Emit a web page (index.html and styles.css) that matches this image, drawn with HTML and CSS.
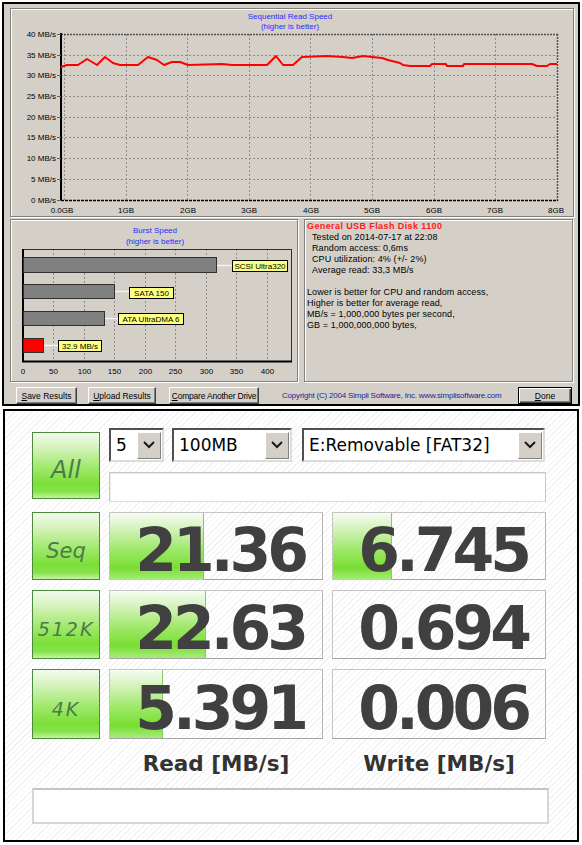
FILE: index.html
```html
<!DOCTYPE html>
<html lang="en">
<head>
    <meta charset="UTF-8">
    <title>HD Speed / CrystalDiskMark</title>
    <link rel="stylesheet" href="styles.css">
</head>
<body>
    <div class="hds">
        <div class="panel graph">
            <svg class="chart" width="562" height="207" viewBox="11 9 562 207">
                <text class="ttl" x="290" y="19" text-anchor="middle">Sequential Read Speed</text>
                <text class="ttl" x="290" y="29" text-anchor="middle">(higher is better)</text>
                <g class="grid-line">
                    <line x1="61" y1="55.5" x2="557" y2="55.5"/>
                    <line x1="61" y1="75.5" x2="557" y2="75.5"/>
                    <line x1="61" y1="96.5" x2="557" y2="96.5"/>
                    <line x1="61" y1="117.5" x2="557" y2="117.5"/>
                    <line x1="61" y1="137.5" x2="557" y2="137.5"/>
                    <line x1="61" y1="158.5" x2="557" y2="158.5"/>
                    <line x1="61" y1="179.5" x2="557" y2="179.5"/>
                    <line x1="64.5" y1="34" x2="64.5" y2="200"/>
                    <line x1="126.5" y1="34" x2="126.5" y2="200"/>
                    <line x1="187.5" y1="34" x2="187.5" y2="200"/>
                    <line x1="249.5" y1="34" x2="249.5" y2="200"/>
                    <line x1="310.5" y1="34" x2="310.5" y2="200"/>
                    <line x1="372.5" y1="34" x2="372.5" y2="200"/>
                    <line x1="434.5" y1="34" x2="434.5" y2="200"/>
                    <line x1="495.5" y1="34" x2="495.5" y2="200"/>
                </g>
                <g class="frame-line">
                    <line x1="61" y1="34.5" x2="558" y2="34.5"/>
                    <line x1="557.5" y1="34" x2="557.5" y2="201"/>
                </g>
                <line class="axis" x1="61" y1="33" x2="61" y2="201"/>
                <line class="axis-x" x1="61" y1="200.5" x2="558" y2="200.5"/>
                <g class="tick">
                    <line x1="57" y1="34.5" x2="61" y2="34.5"/>
                    <line x1="57" y1="55.5" x2="61" y2="55.5"/>
                    <line x1="57" y1="75.5" x2="61" y2="75.5"/>
                    <line x1="57" y1="96.5" x2="61" y2="96.5"/>
                    <line x1="57" y1="117.5" x2="61" y2="117.5"/>
                    <line x1="57" y1="137.5" x2="61" y2="137.5"/>
                    <line x1="57" y1="158.5" x2="61" y2="158.5"/>
                    <line x1="57" y1="179.5" x2="61" y2="179.5"/>
                    <line x1="57" y1="200.5" x2="61" y2="200.5"/>
                </g>
                <g text-anchor="end">
                    <text x="56" y="37">40 MB/s</text>
                    <text x="56" y="58">35 MB/s</text>
                    <text x="56" y="78">30 MB/s</text>
                    <text x="56" y="99">25 MB/s</text>
                    <text x="56" y="120">20 MB/s</text>
                    <text x="56" y="140">15 MB/s</text>
                    <text x="56" y="161">10 MB/s</text>
                    <text x="56" y="182">5 MB/s</text>
                    <text x="56" y="203">0 MB/s</text>
                </g>
                <g text-anchor="middle">
                    <text x="62" y="213">0.0GB</text>
                    <text x="126" y="213">1GB</text>
                    <text x="188" y="213">2GB</text>
                    <text x="249" y="213">3GB</text>
                    <text x="311" y="213">4GB</text>
                    <text x="372" y="213">5GB</text>
                    <text x="434" y="213">6GB</text>
                    <text x="495" y="213">7GB</text>
                    <text x="556" y="213">8GB</text>
                </g>
                <polyline class="speed" points="61,67 67,65 78,65 87,59 97,65 105,57 113,63 120,65 138,65 148,57 157,60 164,65 172,62 180,62 188,65 222,64 232,65 267,65 276,56 283,65 293,65 302,57 327,56 343,57 352,58 363,56 372,57 382,58 388,60 400,63 403,65 410,66 430,66 432,64 446,64 447,66 463,66 464,64 532,64 537,66 547,66 550,64 557,64"/>
            </svg>
        </div>
        <div class="lower">
            <div class="panel burst">
                <svg class="chart" width="286" height="161" viewBox="11 220 286 161">
                    <text class="ttl" x="155" y="233" text-anchor="middle">Burst Speed</text>
                    <text class="ttl" x="155" y="244" text-anchor="middle">(higher is better)</text>
                    <g class="grid-line">
                        <line x1="53.5" y1="249" x2="53.5" y2="362"/>
                        <line x1="84.5" y1="249" x2="84.5" y2="362"/>
                        <line x1="114.5" y1="249" x2="114.5" y2="362"/>
                        <line x1="145.5" y1="249" x2="145.5" y2="362"/>
                        <line x1="175.5" y1="249" x2="175.5" y2="362"/>
                        <line x1="206.5" y1="249" x2="206.5" y2="362"/>
                        <line x1="236.5" y1="249" x2="236.5" y2="362"/>
                        <line x1="267.5" y1="249" x2="267.5" y2="362"/>
                    </g>
                    <rect class="plot" x="23" y="249.5" width="268.5" height="112"/>
                    <line class="axis" x1="23" y1="249" x2="23" y2="362"/>
                    <line class="axis" x1="22" y1="361.5" x2="292" y2="361.5"/>
                    <g class="link">
                        <line x1="217" y1="265.5" x2="232" y2="265.5"/>
                        <line x1="114" y1="291.5" x2="129" y2="291.5"/>
                        <line x1="104" y1="318.5" x2="118" y2="318.5"/>
                        <line x1="43" y1="345.5" x2="58" y2="345.5"/>
                    </g>
                    <rect class="bar" x="23.5" y="257.5" width="193" height="15"/>
                    <rect class="bar" x="23.5" y="284.5" width="91" height="14"/>
                    <rect class="bar" x="23.5" y="311.5" width="81" height="14"/>
                    <rect class="bar bar-own" x="23.5" y="338.5" width="20" height="14"/>
                    <rect class="tag" x="232.5" y="260.5" width="55" height="11"/>
                    <rect class="tag" x="129.5" y="287.5" width="44" height="11"/>
                    <rect class="tag" x="118.5" y="313.5" width="65" height="11"/>
                    <rect class="tag" x="58.5" y="340.5" width="43" height="11"/>
                    <g text-anchor="middle">
                        <text x="260" y="269">SCSI Ultra320</text>
                        <text x="151.5" y="296">SATA 150</text>
                        <text x="151" y="322">ATA UltraDMA 6</text>
                        <text x="80" y="349">32.9 MB/s</text>
                        <text x="23" y="374">0</text>
                        <text x="53.5" y="374">50</text>
                        <text x="84.5" y="374">100</text>
                        <text x="114.5" y="374">150</text>
                        <text x="145.5" y="374">200</text>
                        <text x="175.5" y="374">250</text>
                        <text x="206.5" y="374">300</text>
                        <text x="236.5" y="374">350</text>
                        <text x="267.5" y="374">400</text>
                    </g>
                </svg>
            </div>
            <div class="panel info">
                <div class="drive">General USB Flash Disk 1100</div>
                <div class="stat">Tested on 2014-07-17 at 22:08</div>
                <div class="stat">Random access: 0,6ms</div>
                <div class="stat">CPU utilization: 4% (+/- 2%)</div>
                <div class="stat">Average read: 33,3 MB/s</div>
                <div class="notes">
                    <div>Lower is better for CPU and random access,</div>
                    <div>Higher is better for average read,</div>
                    <div>MB/s = 1,000,000 bytes per second,</div>
                    <div>GB = 1,000,000,000 bytes,</div>
                </div>
            </div>
        </div>
        <div class="actions">
            <button class="btn btn-save"><u>S</u>ave Results</button>
            <button class="btn btn-upload"><u>U</u>pload Results</button>
            <button class="btn btn-compare"><u>C</u>ompare Another Drive</button>
            <span class="copyright">Copyright (C) 2004 Simpli Software, Inc. www.simplisoftware.com</span>
            <button class="btn btn-done"><u>D</u>one</button>
        </div>
    </div>

    <div class="cdm">
        <div class="board">
            <div class="mode mode-all">All</div>
            <div class="setup">
                <div class="selects">
                    <div class="select sel-count">
                        <span class="value">5</span>
                        <span class="arrow"><svg width="12" height="8" viewBox="0 0 12 8"><polyline points="1,1 6,6 11,1"/></svg></span>
                    </div>
                    <div class="select sel-size">
                        <span class="value">100MB</span>
                        <span class="arrow"><svg width="12" height="8" viewBox="0 0 12 8"><polyline points="1,1 6,6 11,1"/></svg></span>
                    </div>
                    <div class="select sel-drive">
                        <span class="value">E:Removable [FAT32]</span>
                        <span class="arrow"><svg width="12" height="8" viewBox="0 0 12 8"><polyline points="1,1 6,6 11,1"/></svg></span>
                    </div>
                </div>
                <div class="status"></div>
            </div>

            <div class="mode">Seq</div>
            <div class="cell"><div class="fill" style="width: 44.4%"></div><div class="num">21.36</div></div>
            <div class="cell"><div class="fill" style="width: 27.6%"></div><div class="num">6.745</div></div>

            <div class="mode mode-small">512K</div>
            <div class="cell"><div class="fill" style="width: 45.3%"></div><div class="num">22.63</div></div>
            <div class="cell"><div class="num">0.694</div></div>

            <div class="mode mode-small">4K</div>
            <div class="cell"><div class="fill" style="width: 24.8%"></div><div class="num">5.391</div></div>
            <div class="cell"><div class="num">0.006</div></div>

            <div></div>
            <div class="unit">Read [MB/s]</div>
            <div class="unit">Write [MB/s]</div>

            <div class="comment"></div>
        </div>
    </div>
</body>
</html>
```

FILE: styles.css
```css
* {
    box-sizing: border-box;
}
body {
    margin: 0;
    width: 582px;
    height: 845px;
    overflow: hidden;
    background: #fff;
    font-family: "Liberation Sans", Arial, sans-serif;
}

/* HD Speed window */
.hds {
    width: 578px;
    height: 404px;
    margin: 2px 0 0 2px;
    padding: 4px 0 0 6px;
    border: 2px solid #000;
    background: #d4d0c8;
}
.panel {
    border: 1px solid #808080;
    box-shadow: inset 1px 1px 0 #fff, 1px 1px 0 #fff;
}
.graph {
    width: 564px;
    height: 209px;
}
.chart {
    display: block;
}
.chart text {
    font-family: "Liberation Sans", Arial, sans-serif;
    font-size: 8px;
    fill: #000;
}
.chart .ttl {
    fill: #2b2bff;
}
.grid-line line {
    stroke: #8c8c8c;
    stroke-width: 1;
    stroke-dasharray: 2 2;
}
.frame-line line {
    stroke: #505050;
    stroke-width: 1.5;
    stroke-dasharray: 2 1;
}
.axis {
    stroke: #000;
    stroke-width: 2;
}
.axis-x {
    stroke: #000;
    stroke-width: 1.5;
    stroke-dasharray: 3 1;
}
.tick line {
    stroke: #606060;
    stroke-width: 1;
}
.speed {
    fill: none;
    stroke: #ff0000;
    stroke-width: 2;
    stroke-linejoin: round;
}
.plot {
    fill: none;
    stroke: #303030;
    stroke-width: 1;
}
.bar {
    fill: #808080;
    stroke: #303030;
    stroke-width: 1;
}
.bar-own {
    fill: #ff0000;
}
.link line {
    stroke: #f4f4f4;
    stroke-width: 1.5;
}
.tag {
    fill: #ffff80;
    stroke: #000;
    stroke-width: 1;
}

.lower {
    display: flex;
    margin-top: 2px;
}
.burst {
    width: 288px;
    height: 163px;
}
.info {
    width: 269px;
    height: 163px;
    margin-left: 6px;
    padding: 1px 0 0 2px;
    font-size: 9px;
    line-height: 11px;
    letter-spacing: 0.1px;
    color: #000;
}
.drive {
    color: #ff1a1a;
    font-weight: bold;
    letter-spacing: 0.4px;
}
.stat {
    padding-left: 5px;
}
.notes {
    margin-top: 11px;
}

.actions {
    display: flex;
    align-items: center;
    height: 17px;
    margin-top: 5px;
}
.btn {
    height: 17px;
    padding: 0;
    border: 1px solid;
    border-color: #fff #404040 #404040 #fff;
    box-shadow: inset -1px -1px 0 #808080;
    background: #d4d0c8;
    color: #000;
    font-family: "Liberation Sans", Arial, sans-serif;
    font-size: 8.5px;
}
.btn-save {
    width: 61px;
    margin-left: 6px;
}
.btn-upload {
    width: 68px;
    margin-left: 11px;
}
.btn-compare {
    width: 90px;
    margin-left: 13px;
    letter-spacing: -0.2px;
}
.copyright {
    margin-left: 23px;
    font-size: 8px;
    letter-spacing: -0.2px;
    color: #22229a;
}
.btn-done {
    width: 54px;
    margin-left: auto;
    margin-right: 6px;
    border-color: #000;
    box-shadow: inset 1px 1px 0 #fff, inset -1px -1px 0 #404040, inset -2px -2px 0 #808080;
}

/* CrystalDiskMark window */
.cdm {
    width: 576px;
    height: 433px;
    margin: 3px 0 0 3px;
    padding: 17px 0 0 27px;
    border: 2px solid #000;
    background: repeating-linear-gradient(135deg, #fff 0 3px, #f2f2f2 3px 4px);
    font-family: "DejaVu Sans", Verdana, sans-serif;
}
.board {
    display: grid;
    grid-template-columns: 68px 214px 214px;
    grid-template-rows: 74px 68px 69px 70px 28px 37px;
    column-gap: 9px;
    row-gap: 10px;
}
.mode {
    display: flex;
    align-items: center;
    justify-content: center;
    padding-top: 9px;
    border: 1px solid #4c8a3c;
    background: linear-gradient(#f3fbee 0%, #d5f3bd 22%, #a6ea74 50%, #7bdf38 78%, #86e24a 90%, #c4f3a2 100%);
    color: #4b7a4b;
    font-size: 21px;
    font-style: italic;
}
.mode-all {
    height: 67px;
    margin-top: 4px;
    font-size: 24px;
}
.mode-small {
    font-size: 19px;
    letter-spacing: 2px;
}

.setup {
    grid-column: 2 / 4;
    display: flex;
    flex-direction: column;
}
.selects {
    display: flex;
    height: 34px;
}
.select {
    display: flex;
    align-items: center;
    border: 2px solid;
    border-color: #505050 #dcdcdc #dcdcdc #505050;
    background: #fff;
    color: #000;
    font-size: 17px;
}
.select .value {
    flex: 1;
    padding-left: 5px;
}
.arrow {
    display: flex;
    align-items: center;
    justify-content: center;
    width: 24px;
    height: 27px;
    margin-right: 1px;
    border: 1px solid;
    border-color: #fff #808080 #808080 #fff;
    background: #d4d0c8;
}
.arrow polyline {
    fill: none;
    stroke: #1a1a1a;
    stroke-width: 2;
}
.sel-count {
    width: 55px;
}
.sel-size {
    width: 120px;
    margin-left: 8px;
}
.sel-drive {
    flex: 1;
    margin-left: 10px;
    margin-right: 1px;
}
.status {
    height: 30px;
    margin-top: 10px;
    border: 1px solid #c8c8c8;
    border-bottom-color: #dadada;
    background: #fff;
    box-shadow: inset 1px 1px 0 #ececec;
}

.cell {
    display: grid;
    border: 1px solid #c6c6c6;
    border-bottom-color: #a4a4a4;
    border-right-color: #b4b4b4;
}
.cell > * {
    grid-area: 1 / 1;
}
.fill {
    height: 100%;
    border-right: 1px solid #86c86a;
    background: linear-gradient(#f6fcf2 0%, #d2f2b8 25%, #9ee868 55%, #78de32 82%, #a8ec7c 100%);
}
.num {
    justify-self: end;
    align-self: center;
    padding: 7px 17px 0 0;
    color: #404040;
    font-size: 60px;
    font-weight: bold;
    line-height: 1;
    letter-spacing: -4px;
}
.unit {
    align-self: center;
    text-align: center;
    color: #333;
    font-size: 21.5px;
    font-weight: bold;
}
.comment {
    grid-column: 1 / 4;
    margin: 1px -3px 0 0;
    border: 2px solid #d6d6d6;
    border-top-color: #c4c4c4;
    background: #fff;
}
```
